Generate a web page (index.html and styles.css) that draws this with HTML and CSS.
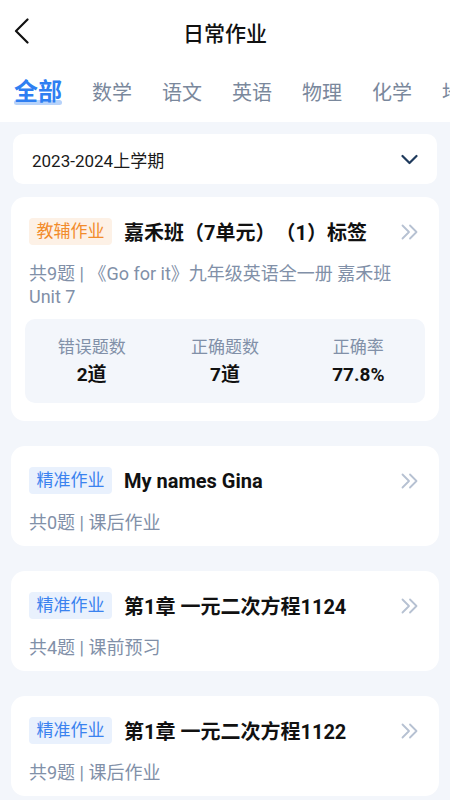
FILE: index.html
```html
<!DOCTYPE html>
<html lang="zh-CN">
<head>
    <meta charset="UTF-8">
    <meta name="viewport" content="width=device-width, initial-scale=1.0">
    <title>日常作业</title>
    <link rel="stylesheet" href="styles.css">
</head>
<body>
    <div class="page">
        <div class="top">
            <div class="header">
                <svg class="back" width="16" height="26" viewBox="0 0 16 26">
                    <path d="M13.5 1.5 L2 13 L13.5 24.5" fill="none" stroke="#111" stroke-width="2.2" stroke-linecap="round" stroke-linejoin="round"/>
                </svg>
                <div class="title">日常作业</div>
            </div>
            <div class="tabs">
                <span class="tab active">全部</span>
                <span class="tab">数学</span>
                <span class="tab">语文</span>
                <span class="tab">英语</span>
                <span class="tab">物理</span>
                <span class="tab">化学</span>
                <span class="tab">地理</span>
            </div>
        </div>

        <div class="content">
            <div class="term">
                <span>2023-2024上学期</span>
                <svg width="17" height="11" viewBox="0 0 17 11">
                    <path d="M1.5 2 L8.5 9 L15.5 2" fill="none" stroke="#1f3a5c" stroke-width="2.2" stroke-linecap="round" stroke-linejoin="round"/>
                </svg>
            </div>

            <div class="card">
                <div class="card-head">
                    <span class="tag orange">教辅作业</span>
                    <span class="name">嘉禾班（7单元）（1）标签</span>
                    <svg class="more" width="18" height="16" viewBox="0 0 18 16">
                        <path d="M1.5 1.5 L8 8 L1.5 14.5 M9 1.5 L15.5 8 L9 14.5" fill="none" stroke="#b6c1d2" stroke-width="1.8" stroke-linecap="round" stroke-linejoin="round"/>
                    </svg>
                </div>
                <div class="info">共9题 | 《Go for it》九年级英语全一册 嘉禾班 Unit 7</div>
                <div class="stats">
                    <div class="stat">
                        <div class="label">错误题数</div>
                        <div class="value">2道</div>
                    </div>
                    <div class="stat">
                        <div class="label">正确题数</div>
                        <div class="value">7道</div>
                    </div>
                    <div class="stat">
                        <div class="label">正确率</div>
                        <div class="value">77.8%</div>
                    </div>
                </div>
            </div>

            <div class="card">
                <div class="card-head">
                    <span class="tag blue">精准作业</span>
                    <span class="name">My names Gina</span>
                    <svg class="more" width="18" height="16" viewBox="0 0 18 16">
                        <path d="M1.5 1.5 L8 8 L1.5 14.5 M9 1.5 L15.5 8 L9 14.5" fill="none" stroke="#b6c1d2" stroke-width="1.8" stroke-linecap="round" stroke-linejoin="round"/>
                    </svg>
                </div>
                <div class="info">共0题 | 课后作业</div>
            </div>

            <div class="card">
                <div class="card-head">
                    <span class="tag blue">精准作业</span>
                    <span class="name">第1章 一元二次方程1124</span>
                    <svg class="more" width="18" height="16" viewBox="0 0 18 16">
                        <path d="M1.5 1.5 L8 8 L1.5 14.5 M9 1.5 L15.5 8 L9 14.5" fill="none" stroke="#b6c1d2" stroke-width="1.8" stroke-linecap="round" stroke-linejoin="round"/>
                    </svg>
                </div>
                <div class="info">共4题 | 课前预习</div>
            </div>

            <div class="card">
                <div class="card-head">
                    <span class="tag blue">精准作业</span>
                    <span class="name">第1章 一元二次方程1122</span>
                    <svg class="more" width="18" height="16" viewBox="0 0 18 16">
                        <path d="M1.5 1.5 L8 8 L1.5 14.5 M9 1.5 L15.5 8 L9 14.5" fill="none" stroke="#b6c1d2" stroke-width="1.8" stroke-linecap="round" stroke-linejoin="round"/>
                    </svg>
                </div>
                <div class="info">共9题 | 课后作业</div>
            </div>
        </div>
    </div>
</body>
</html>
```

FILE: styles.css
```css
body {
    margin: 0;
    overflow: hidden;
    font-family: Roboto, "Noto Sans CJK SC", sans-serif;
    background: #f3f6fb;
    color: #111;
    text-spacing-trim: space-all;
}

.page {
    width: 450px;
    height: 800px;
    overflow: hidden;
}

.top {
    background: #fff;
    height: 122px;
}

.header {
    height: 62px;
    display: flex;
    align-items: center;
    justify-content: center;
    position: relative;
}

.back {
    position: absolute;
    left: 14px;
    top: 18px;
}

.title {
    font-size: 21px;
    font-weight: 500;
    margin-top: 1px;
}

.tabs {
    display: flex;
    align-items: center;
    gap: 30px;
    padding: 0 0 0 14px;
    height: 60px;
    white-space: nowrap;
}

.tab {
    font-size: 20px;
    color: #7a889c;
    line-height: 28px;
    margin-top: 1px;
}

.tab.active {
    position: relative;
    font-size: 24px;
    font-weight: 700;
    color: #2f7ff2;
    margin-top: -1px;
}

.tab.active::after {
    content: "";
    position: absolute;
    left: 0;
    right: 0;
    bottom: 1px;
    height: 5px;
    border-radius: 3px;
    background: rgba(47, 127, 242, 0.35);
}

.content {
    padding: 12px 11px 0;
    display: flex;
    flex-direction: column;
    gap: 25px;
}

.term {
    margin: 0 2px -12px;
    height: 50px;
    background: #fff;
    border-radius: 10px;
    display: flex;
    align-items: center;
    justify-content: space-between;
    padding: 0 19px;
    font-size: 17px;
    color: #1a1a1a;
}

.card {
    background: #fff;
    border-radius: 14px;
    padding: 21px 18px 12px;
}

.card-head {
    display: flex;
    align-items: center;
    height: 27px;
}

.tag {
    font-size: 17px;
    line-height: 27px;
    padding: 0 7.5px;
    border-radius: 4px;
    flex-shrink: 0;
}

.tag.orange {
    background: #fdf1e6;
    color: #f28b2b;
}

.tag.blue {
    background: #e9f1fd;
    color: #3a82ef;
}

.name {
    flex: 1;
    margin-left: 12px;
    font-size: 20px;
    font-weight: 700;
    white-space: nowrap;
    overflow: hidden;
}

.more {
    margin-left: 8px;
    margin-right: 2px;
}

.info {
    margin-top: 17px;
    font-size: 18px;
    line-height: 23px;
    color: #8190a8;
}

.stats {
    margin: 11px -4px 6px;
    background: #f3f6fb;
    border-radius: 10px;
    height: 84px;
    display: flex;
    align-items: center;
}

.stat {
    flex: 1;
    text-align: center;
}

.label {
    font-size: 17px;
    color: #8190a8;
    line-height: 24px;
}

.value {
    font-size: 19px;
    font-weight: 700;
    line-height: 26px;
    margin-top: 3px;
}
```
